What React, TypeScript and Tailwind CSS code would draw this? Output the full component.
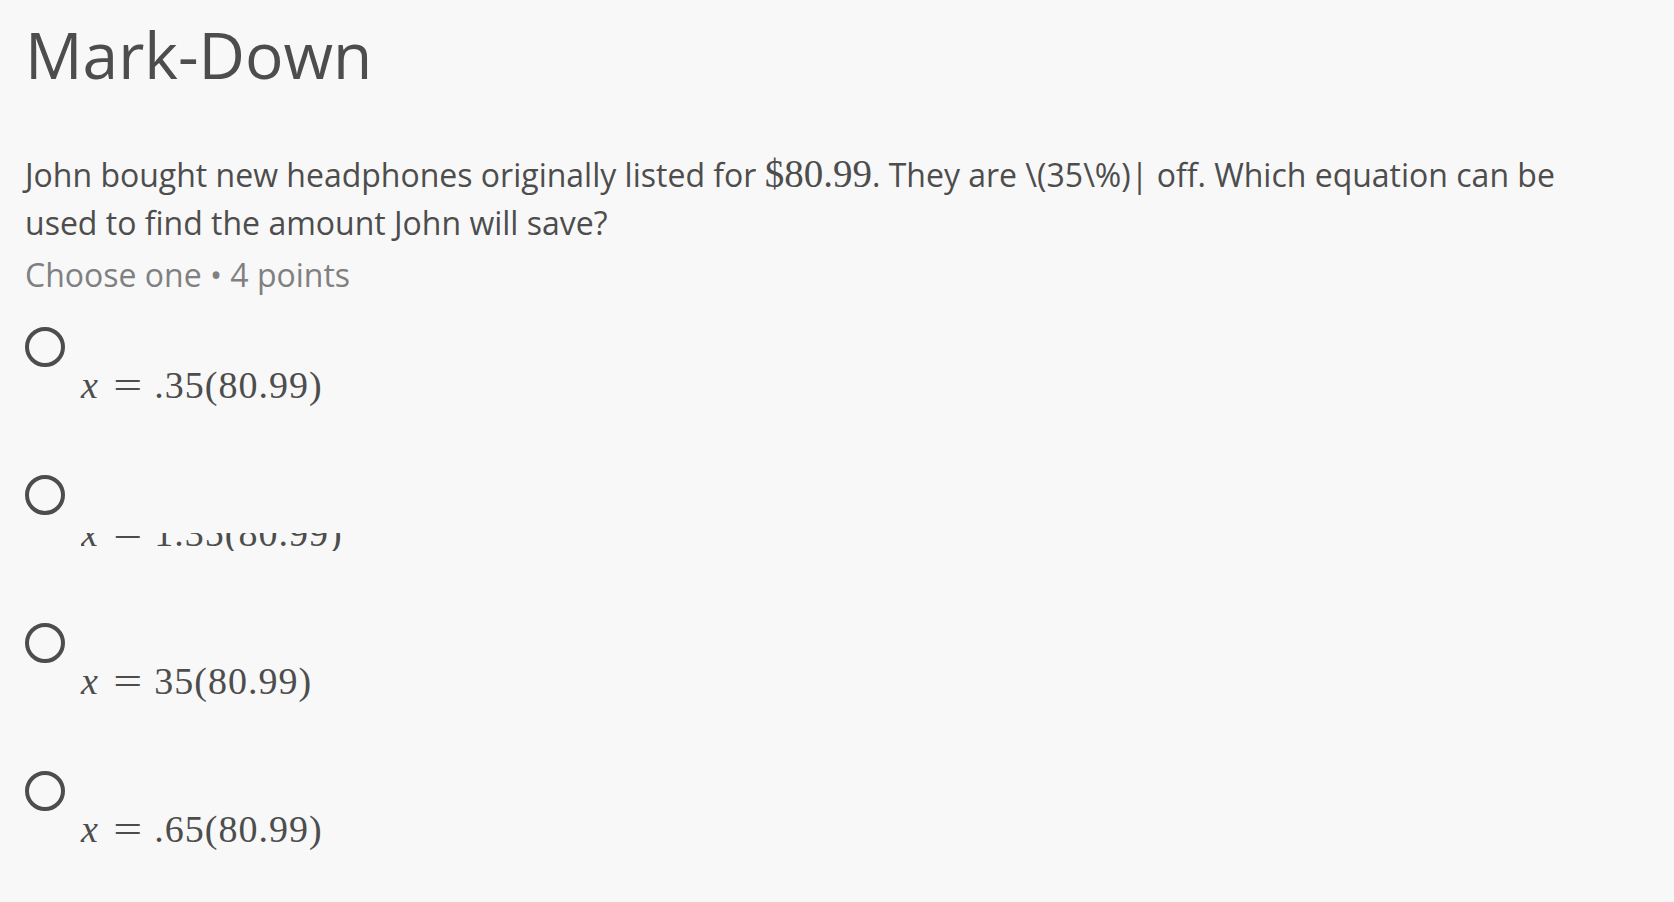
import React from "react";

function Radio() {
  return (
    <div className="w-10 h-10 rounded-full border-[4px] border-[#4d4d4d] box-border" />
  );
}

function Eq({ rhs, clipped }: { rhs: string; clipped?: boolean }) {
  return (
    <div
      className={
        "ml-[56px] text-[38px] leading-[36px] text-[#4d4d4d] font-['Liberation_Serif',serif] whitespace-nowrap " +
        (clipped ? "[clip-path:inset(18px_0_0_0)]" : "")
      }
    >
      <span className="italic tracking-[3px]">x</span>
      <span className="inline-block mx-[16px] scale-x-[1.35]">=</span>
      <span className="tracking-[1px]">{rhs}</span>
    </div>
  );
}

export default function App() {
  const options = [
    { rhs: ".35(80.99)", clipped: false },
    { rhs: "1.35(80.99)", clipped: true },
    { rhs: "35(80.99)", clipped: false },
    { rhs: ".65(80.99)", clipped: false },
  ];
  return (
    <div className="min-h-screen bg-[#f8f8f8] px-[25px] pt-[23px] pb-10 font-['Open_Sans',sans-serif] text-[#4d4d4d]">
      <h1 className="text-[64px] leading-none font-normal">Mark-Down</h1>
      <p className="mt-[64px] max-w-[1560px] text-[32px] leading-[48px]">
        John bought new headphones originally listed for{" "}
        <span className="font-['Liberation_Serif',serif] text-[39px] leading-none">$80.99</span>. They are
        \(35\%)| off. Which equation can be used to find the amount John will save?
      </p>
      <p className="mt-[4px] text-[32px] leading-[48px] text-[#808080]">Choose one • 4 points</p>
      <div className="mt-[28px] flex flex-col gap-[72px]">
        {options.map((o, i) => (
          <div key={i} className="flex flex-col">
            <Radio />
            <Eq rhs={o.rhs} clipped={o.clipped} />
          </div>
        ))}
      </div>
    </div>
  );
}
